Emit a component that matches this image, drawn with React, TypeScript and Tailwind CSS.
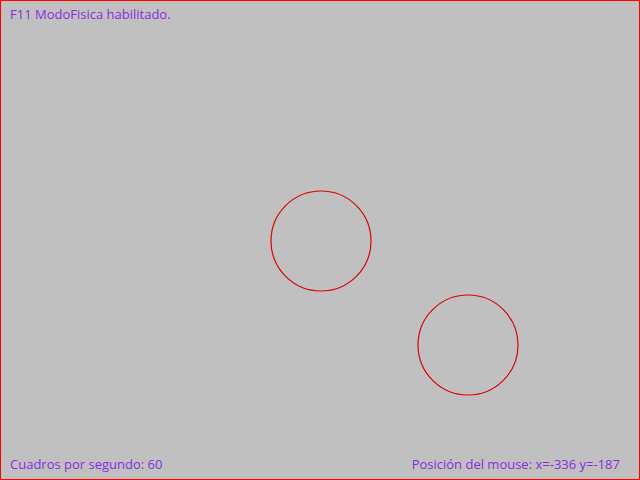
export default function App() {
  return (
    <div className="relative flex h-[480px] w-[640px] flex-col justify-between border border-[#ff0000] bg-[#c0c0c0] px-[9px] pb-[5px] pt-[4px] font-['Open_Sans',sans-serif] text-[13px] text-[#8a2be2]">
      <div>F11 ModoFisica habilitado.</div>

      {/* free canvas bodies */}
      <svg className="absolute left-0 top-0" width="640" height="480" viewBox="0 0 640 480" fill="none">
        <circle cx="320" cy="240" r="50" stroke="#e00000" strokeWidth="1.2" />
        <circle cx="467" cy="344" r="50" stroke="#e00000" strokeWidth="1.2" />
      </svg>

      <div className="flex items-end justify-between">
        <span>Cuadros por segundo: 60</span>
        <span className="pr-[10px]">Posición del mouse: x=-336 y=-187</span>
      </div>
    </div>
  );
}
